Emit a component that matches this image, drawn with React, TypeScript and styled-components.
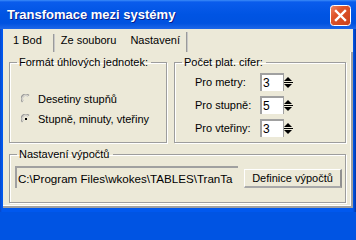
import { Fragment } from 'react'
import styled, { createGlobalStyle } from 'styled-components'


const GlobalStyle = createGlobalStyle`
  html, body {
    margin: 0;
    padding: 0;
    background: #0054E3;
  }
  body {
    font-family: "Liberation Sans", Arial, sans-serif;
    font-size: 11px;
    color: #000;
  }
`

const Window = styled.div`
  width: 356px;
  height: 212px;

  background: linear-gradient(90deg, #0846C8 0, #0058EE 2px, #0058EE 353px, #0035A8 356px);

  display: flex;
  flex-direction: column;
  box-sizing: border-box;
  overflow: hidden;
`

const TitleBar = styled.div`
  height: 29px;
  min-height: 29px;

  background: linear-gradient(180deg, #3C8CF8 0, #0A5CEC 2px, #0054E3 50%, #0052E0 80%, #1E66E8 100%);

  display: flex;
  flex-direction: row;
  align-items: center;
  justify-content: space-between;
  padding: 0 5px 0 7px;
`

const TitleText = styled.div`
  font-family: "Liberation Sans", Arial, sans-serif;
  font-weight: 700;
  font-size: 13px;
  color: #FFF;
  text-shadow: 1px 1px 0 #0A1E8C;
`

const CloseButton = styled.button`
  width: 21px;
  height: 21px;
  margin-top: 2px;
  padding: 0;
  border: none;
  background: none;
  display: flex;
`

const Body = styled.div`
  flex: 1;
  margin: 0 3px 4px 3px;

  background: #ECE9D8;

  display: flex;
  flex-direction: column;
`

const TabRow = styled.div`
  height: 23px;
  min-height: 23px;

  display: flex;
  flex-direction: row;
  align-items: stretch;
  padding-left: 10px;
`

const Tab = styled.div<{ $active?: boolean }>`
  display: flex;
  align-items: center;
  padding-bottom: 2px;
  margin-left: ${p => (p.$active ? '14px' : '0')};
  white-space: nowrap;
`

const TabSep = styled.div<{ $tall?: boolean; $left: number }>`
  width: 2px;
  margin: ${p => (p.$tall ? '3px' : '5px')} 6px 0 ${p => p.$left}px;

  background: linear-gradient(90deg, #9A9A9A 0, #9A9A9A 1px, #C8C8C8 1px);
`

const Panel = styled.div`
  flex: 1;

  border-right: 2px solid #A0A0A0;
  border-bottom: 2px solid #A0A0A0;
  box-shadow: inset -1px -1px 0 #FFF;

  display: flex;
  flex-direction: column;
  gap: 5px;
  padding: 4px 5px 0 6px;
`

const TopRow = styled.div`
  display: grid;
  grid-template-columns: 158px 172px;
  column-gap: 7px;
`

const GroupBox = styled.fieldset<{ $h: number }>`
  height: ${p => p.$h}px;
  margin: 0;
  padding: 0;
  box-sizing: border-box;
  min-width: 0;

  border: 1px solid #9D9D9D;
  box-shadow: inset 1px 1px 0 #FFF, 1px 1px 0 #FFF;
`

const Legend = styled.legend`
  margin-left: 7px;
  padding: 0 3px 0 2px;
  line-height: 13px;
  font-size: 11px;
`

const RadioList = styled.div`
  display: flex;
  flex-direction: column;
  gap: 2px;
  padding: 21px 0 0 11px;
`

const RadioRow = styled.label`
  height: 18px;

  display: flex;
  flex-direction: row;
  align-items: center;
  gap: 7px;
`

const SpinList = styled.div`
  display: grid;
  grid-template-columns: 65px auto;
  row-gap: 5px;
  align-items: center;
  padding: 4px 0 0 20px;
`

const SpinLabel = styled.div`
  white-space: nowrap;
`

const SpinBox = styled.div`
  height: 18px;
  display: flex;
  flex-direction: row;
`

const SpinField = styled.div`
  width: 23px;
  box-sizing: border-box;

  background: #FFF;
  border-top: 2px solid #A0A0A0;
  border-left: 2px solid #A0A0A0;

  display: flex;
  align-items: center;
  padding-left: 1px;
  font-size: 12px;
`

const SpinArrows = styled.div`
  width: 10px;
  display: flex;
`

const BottomRow = styled.div`
  display: flex;
  flex-direction: row;
  align-items: center;
  gap: 6px;
  padding: 5px 3px 0 5px;
`

const PathField = styled.div`
  width: 223px;
  height: 22px;
  box-sizing: border-box;

  border-top: 2px solid #A0A0A0;
  border-left: 2px solid #A0A0A0;

  display: flex;
  align-items: center;
  padding-left: 1px;
  overflow: hidden;
  white-space: nowrap;
  font-size: 11.6px;
`

const PushButton = styled.button`
  width: 98px;
  height: 19px;
  margin-top: 3px;
  padding: 0;

  background: #ECE9D8;
  border: none;
  border-top: 1px solid #FFF;
  border-left: 1px solid #FFF;
  border-right: 2px solid #909090;
  border-bottom: 2px solid #A8A8A8;

  font-family: "Liberation Sans", Arial, sans-serif;
  font-size: 11px;
  color: #000;
  white-space: nowrap;
`


function CloseIcon() {
  return (
    <svg width="21" height="21" viewBox="0 0 21 21">
      <defs>
        <linearGradient id="cg" x1="0" y1="0" x2="1" y2="1">
          <stop offset="0" stopColor="#F08A6A" />
          <stop offset="0.35" stopColor="#E0552A" />
          <stop offset="1" stopColor="#C8401A" />
        </linearGradient>
      </defs>
      <rect x="0.5" y="0.5" width="20" height="20" rx="3" fill="url(#cg)" stroke="#FFF" />
      <path d="M6 6 L15 15 M15 6 L6 15" stroke="#FFF" strokeWidth="2.4" strokeLinecap="square" />
    </svg>
  )
}

function RadioIcon({ checked }: { checked?: boolean }) {
  return (
    <svg width="10" height="10" viewBox="0 0 10 10">
      <path d="M1.5 8 A4 4 0 0 1 8 1.5" fill="none" stroke="#9A9A9A" strokeWidth="1.3" />
      <path d="M2.5 7 A3 3 0 0 1 7 2.5" fill="none" stroke="#C8C8C8" strokeWidth="1" />
      {checked && <rect x="4" y="4" width="2" height="2" fill="#000" />}
    </svg>
  )
}

function SpinIcon() {
  return (
    <svg width="10" height="18" viewBox="0 0 10 18">
      <rect x="0" y="0" width="1" height="18" fill="#A0A0A0" />
      <path d="M5 4 L9 8 L1 8 Z" fill="#000" />
      <rect x="1" y="9" width="9" height="1" fill="#000" />
      <path d="M1 11 L9 11 L5 15 Z" fill="#000" />
    </svg>
  )
}


const SPINS = [
  { label: 'Pro metry:', value: '3' },
  { label: 'Pro stupně:', value: '5' },
  { label: 'Pro vteřiny:', value: '3' },
]


export default function App() {
  return (
    <>
      <GlobalStyle />
      <Window>

        <TitleBar>
          <TitleText>Transfomace mezi systémy</TitleText>
          <CloseButton>
            <CloseIcon />
          </CloseButton>
        </TitleBar>

        <Body>
          <TabRow>
            <Tab>1 Bod</Tab>
            <TabSep $left={11} />
            <Tab>Ze souboru</Tab>
            <Tab $active>Nastavení</Tab>
            <TabSep $tall $left={6} />
          </TabRow>

          <Panel>
            <TopRow>
              <GroupBox $h={87}>
                <Legend>Formát úhlových jednotek:</Legend>
                <RadioList>
                  <RadioRow>
                    <RadioIcon />
                    Desetiny stupňů
                  </RadioRow>
                  <RadioRow>
                    <RadioIcon checked />
                    Stupně, minuty, vteřiny
                  </RadioRow>
                </RadioList>
              </GroupBox>

              <GroupBox $h={87}>
                <Legend>Počet plat. cifer:</Legend>
                <SpinList>
                  {SPINS.map(s => (
                    <Fragment key={s.label}>
                      <SpinLabel>{s.label}</SpinLabel>
                      <SpinBox>
                        <SpinField>{s.value}</SpinField>
                        <SpinArrows>
                          <SpinIcon />
                        </SpinArrows>
                      </SpinBox>
                    </Fragment>
                  ))}
                </SpinList>
              </GroupBox>
            </TopRow>

            <GroupBox $h={55}>
              <Legend>Nastavení výpočtů</Legend>
              <BottomRow>
                <PathField>C:\Program Files\wkokes\TABLES\TranTa</PathField>
                <PushButton>Definice výpočtů</PushButton>
              </BottomRow>
            </GroupBox>
          </Panel>
        </Body>

      </Window>
    </>
  )
}
